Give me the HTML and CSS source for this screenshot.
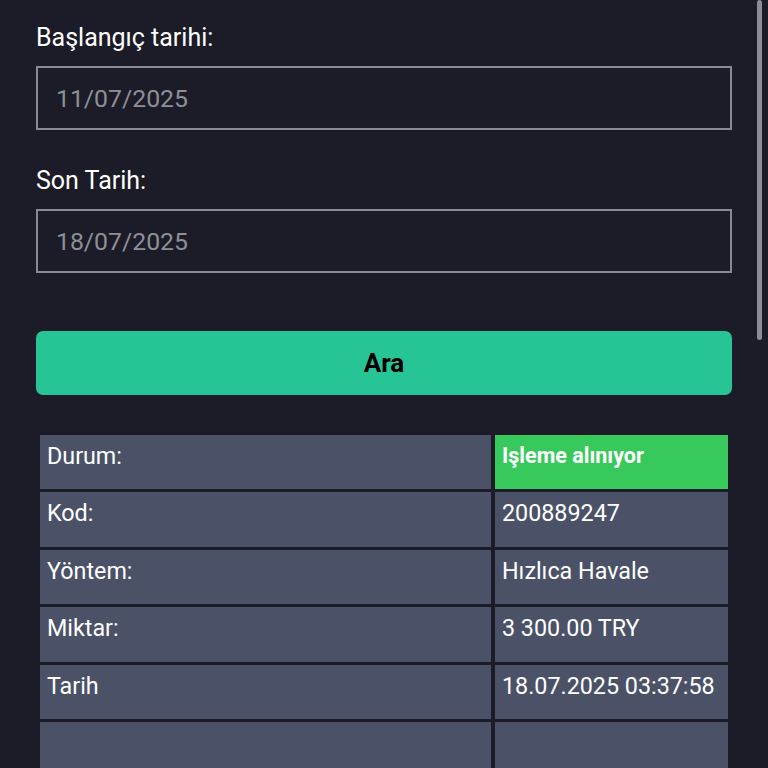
FILE: index.html
```html
<!DOCTYPE html>
<html lang="tr">
<head>
<meta charset="utf-8">
<title>Arama</title>
<link rel="stylesheet" href="styles.css">
</head>
<body>
<div class="page">
  <div class="field">
    <label class="label">Başlangıç tarihi:</label>
    <div class="input">11/07/2025</div>
  </div>
  <div class="field">
    <label class="label">Son Tarih:</label>
    <div class="input">18/07/2025</div>
  </div>
  <button class="btn">Ara</button>
  <div class="table">
    <div class="cell">Durum:</div>
    <div class="cell status">Işleme alınıyor</div>
    <div class="cell">Kod:</div>
    <div class="cell">200889247</div>
    <div class="cell">Yöntem:</div>
    <div class="cell">Hızlıca Havale</div>
    <div class="cell">Miktar:</div>
    <div class="cell">3 300.00 TRY</div>
    <div class="cell">Tarih</div>
    <div class="cell">18.07.2025 03:37:58</div>
    <div class="cell"></div>
    <div class="cell"></div>
  </div>
</div>
<div class="scrollbar"></div>
</body>
</html>
```
FILE: styles.css
```css
html, body {
  margin: 0;
  padding: 0;
  background: #1b1c27;
  height: 100%;
  overflow: hidden;
}
body {
  font-family: Roboto, "Liberation Sans", sans-serif;
  color: #ffffff;
}
.page {
  padding: 24px 36px 0 36px;
  width: 696px;
}
.field {
  display: flex;
  flex-direction: column;
  gap: 14px;
  margin-bottom: 37px;
}
.label {
  font-size: 25px;
  line-height: 28px;
  color: #ffffff;
}
.input {
  box-sizing: border-box;
  height: 64px;
  border: 2px solid #8a8b92;
  padding: 0 18px;
  display: flex;
  align-items: center;
  font-size: 24.8px;
  color: #8e8f97;
}
.btn {
  display: block;
  width: 100%;
  height: 64px;
  margin-top: 58px;
  border: none;
  border-radius: 7px;
  background: #27c495;
  color: #000000;
  font-family: Roboto, "Liberation Sans", sans-serif;
  font-weight: 700;
  font-size: 26px;
}
.table {
  margin-top: 37px;
  padding: 3px 4px;
  display: grid;
  grid-template-columns: 451px 1fr;
  grid-auto-rows: 54.4px;
  column-gap: 4px;
  row-gap: 3px;
}
.cell {
  background: #4b5268;
  padding: 8px 7px;
  font-size: 23.3px;
  line-height: 26px;
  color: #ffffff;
}
.cell.status {
  background: #37c95b;
  font-weight: 700;
  font-size: 21.5px;
}
.scrollbar {
  position: absolute;
  top: 0;
  left: 757px;
  width: 5px;
  height: 340px;
  border-radius: 3px;
  background: #8b8d96;
}
```
